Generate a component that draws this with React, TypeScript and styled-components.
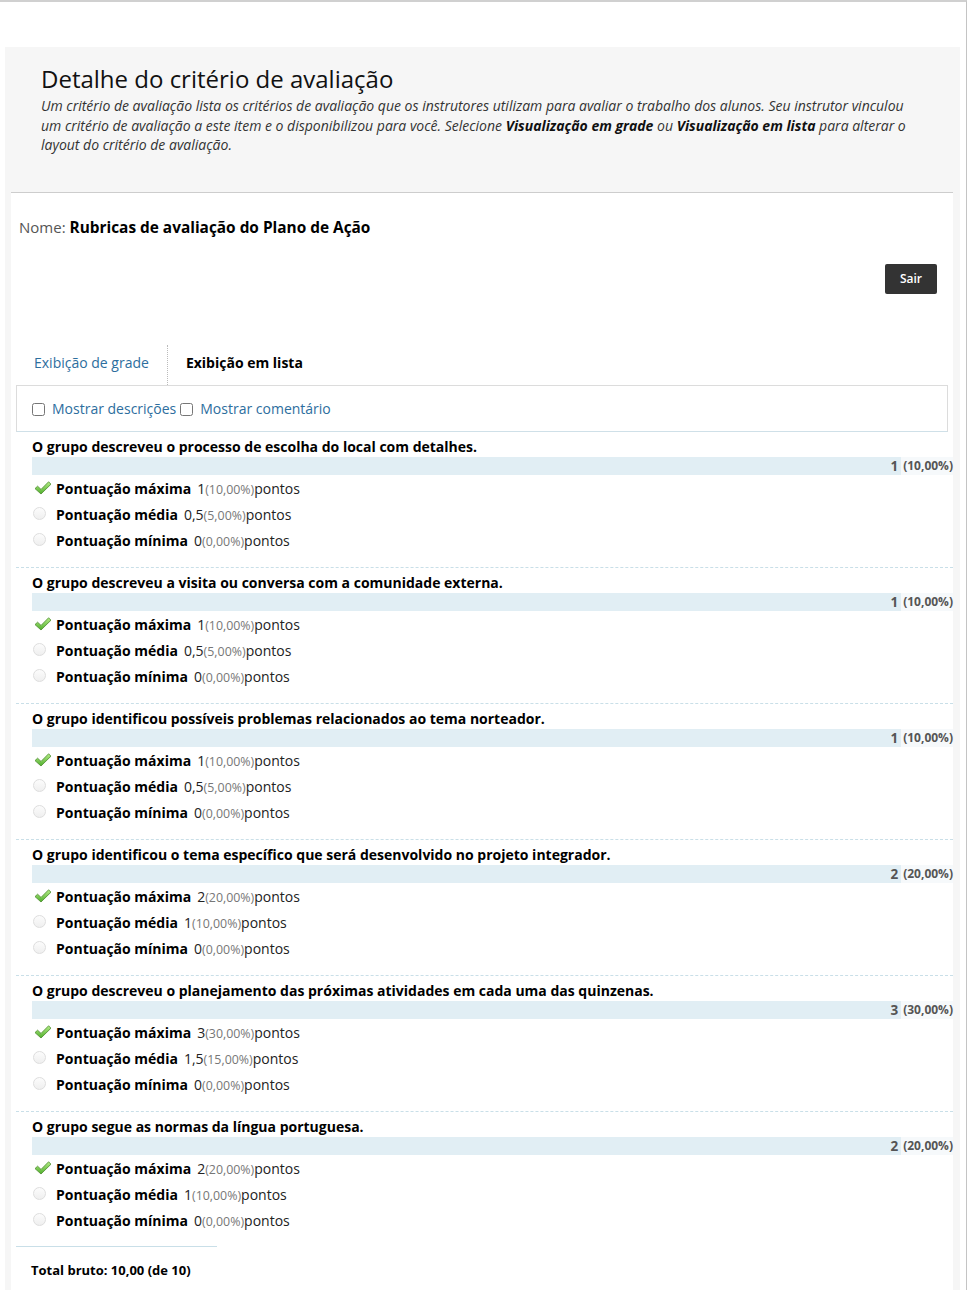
import React from 'react';
import styled, { createGlobalStyle } from 'styled-components';

const GlobalStyle = createGlobalStyle`
    html, body {
        margin: 0;
        padding: 0;
        background: #fff;
        overflow: hidden;
    }
    body {
        font-family: "Open Sans", "Liberation Sans", sans-serif;
        color: #000;
    }
`;

type Level = { label: string; value: string; percent: string; selected?: boolean };
type Criterion = { title: string; points: string; percent: string; levels: Level[] };

const levels = (max: string, maxP: string, mid: string, midP: string): Level[] => [
    { label: 'Pontuação máxima', value: max, percent: maxP, selected: true },
    { label: 'Pontuação média', value: mid, percent: midP },
    { label: 'Pontuação mínima', value: '0', percent: '0,00%' },
];

const criteria: Criterion[] = [
    { title: 'O grupo descreveu o processo de escolha do local com detalhes.', points: '1', percent: '10,00%', levels: levels('1', '10,00%', '0,5', '5,00%') },
    { title: 'O grupo descreveu a visita ou conversa com a comunidade externa.', points: '1', percent: '10,00%', levels: levels('1', '10,00%', '0,5', '5,00%') },
    { title: 'O grupo identificou possíveis problemas relacionados ao tema norteador.', points: '1', percent: '10,00%', levels: levels('1', '10,00%', '0,5', '5,00%') },
    { title: 'O grupo identificou o tema específico que será desenvolvido no projeto integrador.', points: '2', percent: '20,00%', levels: levels('2', '20,00%', '1', '10,00%') },
    { title: 'O grupo descreveu o planejamento das próximas atividades em cada uma das quinzenas.', points: '3', percent: '30,00%', levels: levels('3', '30,00%', '1,5', '15,00%') },
    { title: 'O grupo segue as normas da língua portuguesa.', points: '2', percent: '20,00%', levels: levels('2', '20,00%', '1', '10,00%') },
];

const CheckIcon = () => (
    <svg width="18" height="15" viewBox="0 0 18 15">
        <defs>
            <linearGradient id="chk" x1="0" y1="0" x2="0" y2="1">
                <stop offset="0" stopColor="#b4ec86" />
                <stop offset="1" stopColor="#4fae2c" />
            </linearGradient>
        </defs>
        <path
            d="M1 7.6 L3.6 5.2 L7 8.4 L14.6 0.8 L17 3.2 L7 13 Z"
            fill="url(#chk)"
            stroke="#4a8a2c"
            strokeWidth="0.8"
            strokeLinejoin="round"
        />
    </svg>
);

const App = () => {
    return (
        <Frame>
            <GlobalStyle />
            <Panel>
                <Header>
                    <Title>Detalhe do critério de avaliação</Title>
                    <Description>
                        Um critério de avaliação lista os critérios de avaliação que os instrutores utilizam para avaliar o trabalho dos alunos. Seu instrutor vinculou um critério de avaliação a este item e o disponibilizou para você. Selecione <b>Visualização em grade</b> ou <b>Visualização em lista</b> para alterar o layout do critério de avaliação.
                    </Description>
                </Header>

                <Content>
                    <NameLine>
                        Nome: <strong>Rubricas de avaliação do Plano de Ação</strong>
                    </NameLine>

                    <ButtonRow>
                        <ExitButton>Sair</ExitButton>
                    </ButtonRow>

                    <Tabs>
                        <Tab>Exibição de grade</Tab>
                        <Tab active>Exibição em lista</Tab>
                    </Tabs>

                    <Options>
                        <OptionLabel>
                            <Checkbox type="checkbox" />
                            Mostrar descrições
                        </OptionLabel>
                        <OptionLabel>
                            <Checkbox type="checkbox" />
                            Mostrar comentário
                        </OptionLabel>
                    </Options>

                    {criteria.map((c, i) => (
                        <Block key={i} last={i === criteria.length - 1}>
                            <BlockTitle>{c.title}</BlockTitle>
                            <ScoreBar>
                                <ScoreValue>{c.points}</ScoreValue>
                                <ScorePercent>({c.percent})</ScorePercent>
                            </ScoreBar>
                            <Levels>
                                {c.levels.map((l, j) => (
                                    <LevelRow key={j}>
                                        <Marker>{l.selected ? <CheckIcon /> : <Radio />}</Marker>
                                        <LevelLabel>{l.label}</LevelLabel>
                                        <LevelValue>
                                            {l.value}
                                            <small>({l.percent})</small>
                                            pontos
                                        </LevelValue>
                                    </LevelRow>
                                ))}
                            </Levels>
                        </Block>
                    ))}

                    <Total>Total bruto: 10,00 (de 10)</Total>
                </Content>
            </Panel>
        </Frame>
    );
};
export default App;

const Frame = styled.div`
    box-sizing: border-box;
    width: 967px;
    min-height: 1290px;
    border-top: 2px solid #d0d0d0;
    border-right: 1px solid #c4c4c4;
    padding: 45px 6px 0 5px;
`;

const Panel = styled.div`
    background: #f6f6f6;
    padding: 0 7px 0 6px;
`;

const Header = styled.header`
    padding: 16px 42px 37px 30px;
    border-bottom: 1px solid #cdcdcd;
`;

const Title = styled.h1`
    margin: 0;
    font-size: 24px;
    font-weight: 400;
    line-height: 32px;
    color: #111;
`;

const Description = styled.p`
    margin: 1px 0 0;
    font-size: 14px;
    font-style: italic;
    line-height: 19.5px;
    color: #333;

    b {
        font-weight: 700;
        color: #111;
    }
`;

const Content = styled.section`
    background: #fff;
    padding: 23px 0 60px 5px;
`;

const NameLine = styled.div`
    padding-left: 3px;
    font-size: 15px;
    line-height: 22px;
    color: #555;

    strong {
        color: #000;
        font-weight: 700;
        font-size: 15.4px;
    }
`;

const ButtonRow = styled.div`
    display: flex;
    justify-content: flex-end;
    padding: 25px 16px 0 0;
`;

const ExitButton = styled.button`
    font-family: inherit;
    background: #333;
    color: #fff;
    border: none;
    border-radius: 2px;
    width: 52px;
    height: 30px;
    font-size: 12px;
    font-weight: 600;
    cursor: pointer;
`;

const Tabs = styled.div`
    display: flex;
    margin-top: 51px;
    height: 40px;
`;

const Tab = styled.div<{ active?: boolean }>`
    display: flex;
    align-items: center;
    padding: 0 18px 4px;
    font-size: 14px;
    color: ${p => (p.active ? '#000' : '#2d6e9e')};
    font-weight: ${p => (p.active ? 700 : 400)};
    border-right: ${p => (p.active ? 'none' : '1px dotted #bbb')};
`;

const Options = styled.div`
    box-sizing: border-box;
    width: 932px;
    height: 47px;
    border: 1px solid #dcdcdc;
    border-bottom-color: #cfe0e8;
    display: flex;
    align-items: center;
    padding-left: 11px;
`;

const OptionLabel = styled.label`
    display: flex;
    align-items: center;
    font-size: 14px;
    color: #2d6e9e;
    cursor: pointer;
`;

const Checkbox = styled.input`
    width: 13px;
    height: 13px;
    margin: 2px 7px 0 4px;
`;

const Block = styled.div<{ last?: boolean }>`
    padding: 5px 0 13px 16px;
    border-bottom: ${p => (p.last ? 'none' : '1px dashed #c9dfe8')};
`;

const BlockTitle = styled.div`
    font-size: 14px;
    font-weight: 700;
    line-height: 20px;
    color: #000;
`;

const ScoreBar = styled.div`
    display: flex;
    justify-content: flex-end;
    align-items: stretch;
    height: 18px;
    background: #e1eef4;
`;

const ScoreValue = styled.span`
    font-size: 13.5px;
    font-weight: 700;
    color: #555;
    line-height: 18px;
    padding-right: 3px;
`;

const ScorePercent = styled.span`
    font-size: 12px;
    font-weight: 700;
    color: #555;
    line-height: 18px;
    background: #f6f9fb;
    padding: 0 0 0 2px;
`;

const Levels = styled.div`
    padding-top: 1px;
`;

const LevelRow = styled.div`
    display: flex;
    align-items: center;
    height: 26px;
    font-size: 14px;
`;

const Marker = styled.span`
    display: flex;
    align-items: center;
    width: 24px;
    padding-left: 2px;
    box-sizing: border-box;
`;

const Radio = styled.span`
    box-sizing: border-box;
    width: 13px;
    height: 13px;
    border-radius: 50%;
    border: 1px solid #dedede;
    background: linear-gradient(#fcfcfc, #efefef);
    margin-left: -1px;
    margin-bottom: 2px;
`;

const LevelLabel = styled.span`
    font-weight: 700;
    color: #000;
    margin-right: 6px;
`;

const LevelValue = styled.span`
    color: #222;

    small {
        font-size: 12.4px;
        color: #777;
    }
`;

const Total = styled.div`
    width: 186px;
    border-top: 1px solid #c9dfe8;
    margin-top: -1px;
    padding: 14px 0 0 15px;
    font-size: 13px;
    font-weight: 700;
    color: #000;
`;
